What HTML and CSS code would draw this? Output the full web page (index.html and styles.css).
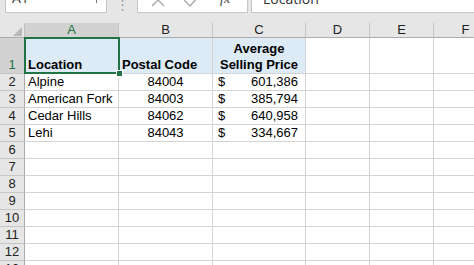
FILE: index.html
```html
<!DOCTYPE html>
<html lang="en">
<head>
    <meta charset="UTF-8">
    <title>Book1 - Excel</title>
    <link rel="stylesheet" href="styles.css">
</head>
<body>

    <!-- Name box + formula bar -->
    <div class="topbar">
        <div class="namebox">
            <span class="nb-text">A1</span>
            <span class="nb-arrow"></span>
        </div>
        <div class="dots">⋮</div>
        <div class="fx-buttons">
            <svg class="fx-icon" width="16" height="12" viewBox="0 0 16 12">
                <path d="M2 -6 L14 6 M14 -6 L2 6" stroke="#a8a8a8" stroke-width="1.4" fill="none"/>
            </svg>
            <svg class="fx-icon" width="18" height="12" viewBox="0 0 18 12">
                <path d="M1 0 L7 6 L16 -4" stroke="#a8a8a8" stroke-width="1.4" fill="none"/>
            </svg>
            <span class="fx-text">fx</span>
        </div>
        <div class="formula">
            <span class="formula-text">Location</span>
        </div>
    </div>

    <!-- Sheet -->
    <div class="sheet">
        <div class="row head-row">
            <div class="corner"><span class="corner-tri"></span></div>
            <div class="ch active">A</div>
            <div class="ch">B</div>
            <div class="ch">C</div>
            <div class="ch">D</div>
            <div class="ch">E</div>
            <div class="ch">F</div>
        </div>

        <div class="row tall">
            <div class="rh active">1</div>
            <div class="c fill bold">Location</div>
            <div class="c fill bold">Postal Code</div>
            <div class="c fill bold center">Average<br>Selling Price</div>
            <div class="c"></div>
            <div class="c"></div>
            <div class="c"></div>
        </div>

        <div class="row">
            <div class="rh">2</div>
            <div class="c">Alpine</div>
            <div class="c center">84004</div>
            <div class="c money"><span>$</span><span>601,386</span></div>
            <div class="c"></div><div class="c"></div><div class="c"></div>
        </div>
        <div class="row">
            <div class="rh">3</div>
            <div class="c">American Fork</div>
            <div class="c center">84003</div>
            <div class="c money"><span>$</span><span>385,794</span></div>
            <div class="c"></div><div class="c"></div><div class="c"></div>
        </div>
        <div class="row">
            <div class="rh">4</div>
            <div class="c">Cedar Hills</div>
            <div class="c center">84062</div>
            <div class="c money"><span>$</span><span>640,958</span></div>
            <div class="c"></div><div class="c"></div><div class="c"></div>
        </div>
        <div class="row">
            <div class="rh">5</div>
            <div class="c">Lehi</div>
            <div class="c center">84043</div>
            <div class="c money"><span>$</span><span>334,667</span></div>
            <div class="c"></div><div class="c"></div><div class="c"></div>
        </div>

        <div class="row"><div class="rh">6</div><div class="c"></div><div class="c"></div><div class="c"></div><div class="c"></div><div class="c"></div><div class="c"></div></div>
        <div class="row"><div class="rh">7</div><div class="c"></div><div class="c"></div><div class="c"></div><div class="c"></div><div class="c"></div><div class="c"></div></div>
        <div class="row"><div class="rh">8</div><div class="c"></div><div class="c"></div><div class="c"></div><div class="c"></div><div class="c"></div><div class="c"></div></div>
        <div class="row"><div class="rh">9</div><div class="c"></div><div class="c"></div><div class="c"></div><div class="c"></div><div class="c"></div><div class="c"></div></div>
        <div class="row"><div class="rh">10</div><div class="c"></div><div class="c"></div><div class="c"></div><div class="c"></div><div class="c"></div><div class="c"></div></div>
        <div class="row"><div class="rh">11</div><div class="c"></div><div class="c"></div><div class="c"></div><div class="c"></div><div class="c"></div><div class="c"></div></div>
        <div class="row"><div class="rh">12</div><div class="c"></div><div class="c"></div><div class="c"></div><div class="c"></div><div class="c"></div><div class="c"></div></div>
        <div class="row"><div class="rh">13</div><div class="c"></div><div class="c"></div><div class="c"></div><div class="c"></div><div class="c"></div><div class="c"></div></div>

        <!-- Selected cell A1 -->
        <div class="selection"><span class="handle"></span></div>
    </div>

</body>
</html>
```

FILE: styles.css
```css
* {
    margin: 0;
    padding: 0;
    box-sizing: border-box;
}

body {
    font-family: "Liberation Sans", Arial, sans-serif;
    font-size: 13px;
    color: #000;
    background: #fff;
    width: 474px;
    height: 265px;
    overflow: hidden;
}

/* Formula bar */
.topbar {
    height: 23px;
    background: #e6e6e6;
    display: flex;
    align-items: flex-start;
}

.namebox {
    width: 102px;
    height: 13px;
    margin-left: 5px;
    background: #fff;
    border: 1px solid #c6c6c6;
    border-top: none;
    overflow: hidden;
    display: flex;
    justify-content: space-between;
}

.nb-text {
    font-family: "Open Sans", sans-serif;
    font-size: 14px;
    line-height: 14px;
    margin-top: -9px;
    margin-left: 6px;
    color: #333;
}

.nb-arrow {
    width: 1px;
    height: 3px;
    background: #777;
    margin-right: 9px;
}

.dots {
    width: 30px;
    height: 13px;
    text-align: center;
    color: #a0a0a0;
    font-size: 13px;
    line-height: 10px;
    overflow: hidden;
}

.fx-buttons {
    width: 111px;
    height: 13px;
    background: #fff;
    border: 1px solid #c6c6c6;
    border-top: none;
    display: flex;
    align-items: flex-start;
    overflow: hidden;
    padding-left: 12px;
    gap: 17px;
}

.fx-icon {
    display: block;
}

.fx-text {
    font-family: "Liberation Serif", serif;
    font-style: italic;
    font-size: 14px;
    line-height: 14px;
    margin-top: -8px;
    margin-left: 2px;
    color: #444;
}

.formula {
    flex: 1;
    height: 13px;
    margin-left: 3px;
    background: #fff;
    border: 1px solid #c6c6c6;
    border-top: none;
    border-right: none;
    overflow: hidden;
}

.formula-text {
    display: block;
    font-family: "Open Sans", sans-serif;
    font-size: 14px;
    line-height: 14px;
    margin-top: -8px;
    margin-left: 11px;
    color: #333;
}

/* Sheet grid */
.sheet {
    position: relative;
}

.row {
    display: grid;
    grid-template-columns: 25px 94px 94px 93px 64px 64px 64px;
    height: 17px;
}

.row.tall {
    height: 36px;
}

.row.head-row {
    height: 15px;
}

.corner {
    background: #e6e6e6;
    border-right: 1px solid #c0c0c0;
    border-bottom: 1px solid #ababab;
    position: relative;
}

.corner-tri {
    position: absolute;
    right: 2px;
    bottom: 1px;
    width: 0;
    height: 0;
    border-left: 9px solid transparent;
    border-bottom: 9px solid #b8b8b8;
}

.ch {
    background: #e6e6e6;
    border-right: 1px solid #c6c6c6;
    border-bottom: 1px solid #ababab;
    text-align: center;
    line-height: 14px;
    color: #222;
}

.ch.active {
    background: #d2d2d2;
    color: #217346;
}

.rh {
    background: #e6e6e6;
    border-right: 1px solid #ababab;
    border-bottom: 1px solid #c6c6c6;
    display: flex;
    align-items: flex-end;
    justify-content: center;
    line-height: 16px;
    color: #222;
}

.rh.active {
    background: #d2d2d2;
    color: #217346;
}

.c {
    border-right: 1px solid #d4d4d4;
    border-bottom: 1px solid #d4d4d4;
    display: flex;
    flex-direction: column;
    justify-content: flex-end;
    padding: 0 3px;
    line-height: 16px;
    white-space: nowrap;
    overflow: hidden;
}

.c.fill {
    background: #ddebf7;
}

.c.bold {
    font-weight: bold;
}

.c.center {
    text-align: center;
}

.c.money {
    flex-direction: row;
    justify-content: space-between;
    align-items: flex-end;
    padding: 0 7px 0 5px;
}

/* Active cell */
.selection {
    position: absolute;
    left: 24px;
    top: 14px;
    width: 96px;
    height: 37px;
    border: 2px solid #217346;
}

.handle {
    position: absolute;
    right: -5px;
    bottom: -5px;
    width: 7px;
    height: 7px;
    background: #217346;
    border: 1px solid #fff;
}
```
